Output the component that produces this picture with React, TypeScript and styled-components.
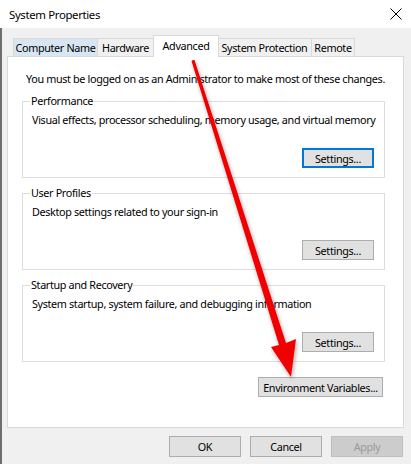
import { createGlobalStyle, styled } from 'styled-components';

const GlobalStyle = createGlobalStyle`
  html, body {
    margin: 0;
    padding: 0;
    background: #f0f0f0;
  }
  body {
    font-family: 'Noto Sans', 'Open Sans', sans-serif;
    font-size: 10.8px;
    letter-spacing: -0.35px;
    color: #000;
  }
`;

const Window = styled.div`
  position: relative;
  width: 411px;
  height: 464px;
  overflow: hidden;
  background: #f0f0f0;
  box-sizing: border-box;
`;

const TitleBar = styled.div`
  height: 28px;
  background: #fff;
  display: flex;
  align-items: center;
  justify-content: space-between;
  padding: 0 9px 0 9px;
  font-size: 11.4px;
`;

const Body = styled.div`
  height: 436px;
  border-left: 2px solid #6e6e6e;
  box-sizing: border-box;
  padding-top: 7px;
`;

const TabStrip = styled.div`
  display: flex;
  align-items: flex-end;
  padding-left: 12px;
  height: 22px;
  position: relative;
  z-index: 1;
  margin-bottom: -1px;
`;

const Tab = styled.div<{ $active?: boolean; $hover?: boolean; $w: number }>`
  width: ${({ $w }) => $w}px;
  box-sizing: border-box;
  height: ${({ $active }) => ($active ? 22 : 19)}px;
  display: flex;
  align-items: center;
  justify-content: center;
  padding-bottom: ${({ $active }) => ($active ? 2 : 0)}px;
  border: 1px solid #d9d9d9;
  border-bottom: ${({ $active }) => ($active ? 'none' : '1px solid #d9d9d9')};
  margin-left: -1px;
  background: ${({ $active, $hover }) => ($active ? '#fff' : $hover ? '#d8e6f2' : '#f0f0f0')};
  margin-right: ${({ $active }) => ($active ? -1 : 0)}px;
  z-index: ${({ $active }) => ($active ? 2 : 1)};
`;

const Panel = styled.div`
  margin-left: 5px;
  width: 397px;
  height: 372px;
  box-sizing: border-box;
  background: #fff;
  border: 1px solid #d9d9d9;
  padding: 15px 18px 0 14px;
`;

const Notice = styled.div`
  line-height: 14px;
  padding-left: 4px;
  margin-bottom: 8px;
  white-space: nowrap;
`;

const Group = styled.fieldset`
  margin: 0 0 8px 0;
  padding: 5px 10px 9px 9px;
  border: 1px solid #dcdcdc;
  min-width: 0;
  display: flex;
  flex-direction: column;
`;

const Legend = styled.legend`
  padding: 0 1px;
  margin-left: -2px;
  line-height: 14px;
`;

const Desc = styled.div`
  line-height: 14px;
  margin-bottom: 21px;
  white-space: nowrap;
`;

const Button = styled.button<{ $w?: number; $default?: boolean; $disabled?: boolean }>`
  font: inherit;
  letter-spacing: inherit;
  width: ${({ $w }) => $w ?? 72}px;
  height: 20px;
  padding: 0;
  box-sizing: border-box;
  background: ${({ $disabled }) => ($disabled ? '#cccccc' : '#e1e1e1')};
  color: ${({ $disabled }) => ($disabled ? '#9a9a9a' : '#000')};
  border: 1px solid ${({ $default, $disabled }) => ($default ? '#0078d7' : $disabled ? '#bfbfbf' : '#adadad')};
  box-shadow: ${({ $default }) => ($default ? 'inset 0 0 0 1px #0078d7' : 'none')};
  align-self: flex-end;
`;

const EnvRow = styled.div`
  display: flex;
  justify-content: flex-end;
  padding-right: 2px;
  margin-top: 15px;
`;

const Footer = styled.div`
  display: flex;
  justify-content: flex-end;
  gap: 9px;
  padding: 8px 8px 0 0;

  ${Button} {
    height: 21px;
  }
`;

const Arrow = styled.svg`
  position: absolute;
  left: 0;
  top: 0;
  pointer-events: none;
  z-index: 5;
`;

const groups = [
  { title: 'Performance', desc: 'Visual effects, processor scheduling, memory usage, and virtual memory', focused: true },
  { title: 'User Profiles', desc: 'Desktop settings related to your sign-in' },
  { title: 'Startup and Recovery', desc: 'System startup, system failure, and debugging information' },
];

const tabs = [
  { label: 'Computer Name', w: 85, hover: true },
  { label: 'Hardware', w: 57 },
  { label: 'Advanced', w: 66, active: true },
  { label: 'System Protection', w: 95 },
  { label: 'Remote', w: 44 },
];

const App = () => (
  <>
    <GlobalStyle />
    <Window>
      <TitleBar>
        <span>System Properties</span>
        <svg width='12' height='12' viewBox='0 0 12 12'>
          <path d='M0.5 0.5L11.5 11.5M11.5 0.5L0.5 11.5' stroke='#000' strokeWidth='1' />
        </svg>
      </TitleBar>
      <Body>
        <TabStrip>
          {tabs.map((t) => (
            <Tab key={t.label} $w={t.w} $active={t.active} $hover={t.hover}>
              {t.label}
            </Tab>
          ))}
        </TabStrip>
        <Panel>
          <Notice>You must be logged on as an Administrator to make most of these changes.</Notice>
          {groups.map((g) => (
            <Group key={g.title}>
              <Legend>{g.title}</Legend>
              <Desc>{g.desc}</Desc>
              <Button $default={g.focused}>Settings...</Button>
            </Group>
          ))}
          <EnvRow>
            <Button $w={125}>Environment Variables...</Button>
          </EnvRow>
        </Panel>
        <Footer>
          <Button>OK</Button>
          <Button>Cancel</Button>
          <Button $disabled>Apply</Button>
        </Footer>
      </Body>
      <Arrow width='411' height='464' viewBox='0 0 411 464'>
        <defs>
          <filter id='shadow' x='-20%' y='-20%' width='140%' height='140%'>
            <feGaussianBlur in='SourceAlpha' stdDeviation='2' />
            <feOffset dx='1' dy='2' />
            <feComponentTransfer>
              <feFuncA type='linear' slope='0.35' />
            </feComponentTransfer>
            <feMerge>
              <feMergeNode />
              <feMergeNode in='SourceGraphic' />
            </feMerge>
          </filter>
        </defs>
        <polygon
          fill='#f00000'
          filter='url(#shadow)'
          points='193,60 194.5,60 286,343 296,339 291,377 271,347 279,345 191.5,61'
        />
      </Arrow>
    </Window>
  </>
);

export default App;
